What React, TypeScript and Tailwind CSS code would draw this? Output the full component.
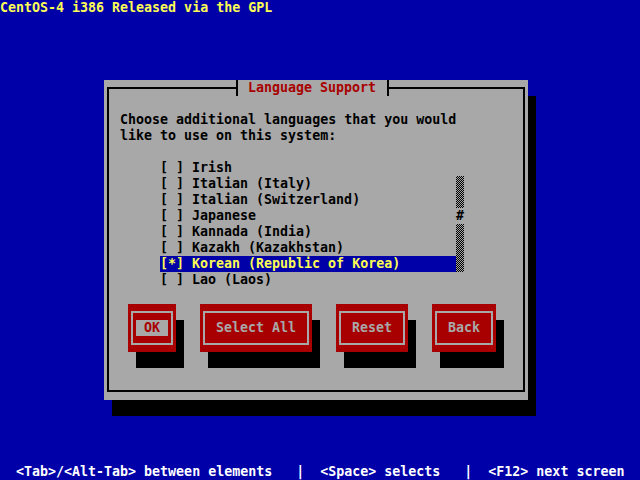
const items: { mark: string; name: string; sel?: boolean }[] = [
  { mark: " ", name: "Irish" },
  { mark: " ", name: "Italian (Italy)" },
  { mark: " ", name: "Italian (Switzerland)" },
  { mark: " ", name: "Japanese" },
  { mark: " ", name: "Kannada (India)" },
  { mark: " ", name: "Kazakh (Kazakhstan)" },
  { mark: "*", name: "Korean (Republic of Korea)", sel: true },
  { mark: " ", name: "Lao (Laos)" },
];

// scrollbar cells per row: "" blank, "c" checker, "#" thumb
const scroll = ["", "c", "c", "#", "c", "c", "c", ""];

function Button({ label, width, focus }: { label: string; width: string; focus?: boolean }) {
  return (
    <div className={`${width} h-12 bg-[#a80000] shadow-[8px_16px_0_0_#000] pt-[7px] pb-[7px] pl-[3px] pr-[3px]`}>
      <div className="h-full border-2 border-[#a8a8a8] flex items-center justify-center">
        {focus ? (
          <div className="w-8 h-4 bg-[#a8a8a8] text-[#a80000] whitespace-pre">{" " + label + " "}</div>
        ) : (
          <div className="h-4 text-[#a8a8a8] whitespace-pre">{label}</div>
        )}
      </div>
    </div>
  );
}

export default function App() {
  return (
    <div className="w-[640px] h-[480px] bg-[#0000a8] flex flex-col overflow-hidden font-['DejaVu_Sans_Mono',monospace] text-[13.3px] leading-4 font-bold">
      <div className="h-4 text-[#fcfc54] whitespace-pre">CentOS-4 i386 Released via the GPL</div>

      <div className="ml-[104px] mt-16 w-[424px] h-[320px] bg-[#a8a8a8] shadow-[8px_16px_0_0_#000] pl-[3px] pt-[7px]">
        <div className="relative w-[418px] h-[305px] border-2 border-black">
          <div className="absolute top-[-9px] left-[127px] h-4 flex bg-[#a8a8a8]">
            <div className="w-[2px] h-4 bg-black" />
            <div className="ml-[10px] w-[128px] text-[#a80000] whitespace-pre">Language Support</div>
            <div className="ml-[11px] w-[2px] h-4 bg-black" />
          </div>

          <div className="pl-[11px] pt-[23px] flex flex-col">
            <div className="text-black whitespace-pre">
              <div className="h-4">Choose additional languages that you would</div>
              <div className="h-4">like to use on this system:</div>
            </div>

            <div className="mt-4 ml-10 flex">
              <div className="w-[296px] flex flex-col">
                {items.map((it) => (
                  <div
                    key={it.name}
                    className={`h-4 whitespace-pre ${it.sel ? "bg-[#0000a8] text-[#fcfc54]" : "text-black"}`}
                  >
                    {`[${it.mark}] ${it.name}`}
                  </div>
                ))}
              </div>
              <div className="w-2 flex flex-col">
                {scroll.map((s, i) =>
                  s === "c" ? (
                    <div
                      key={i}
                      className="h-4 w-2 bg-[repeating-conic-gradient(#000_0_25%,#a8a8a8_0_50%)] bg-size-[2px_2px]"
                    />
                  ) : s === "#" ? (
                    <div key={i} className="h-4 w-2 text-black text-center">#</div>
                  ) : (
                    <div key={i} className="h-4 w-2" />
                  )
                )}
              </div>
            </div>

            <div className="mt-4 ml-2 flex gap-6">
              <Button label="OK" width="w-12" focus />
              <Button label="Select All" width="w-[112px]" />
              <Button label="Reset" width="w-[72px]" />
              <Button label="Back" width="w-16" />
            </div>
          </div>
        </div>
      </div>

      <div className="mt-auto h-4 text-white whitespace-pre">
        {"  <Tab>/<Alt-Tab> between elements   |  <Space> selects   |  <F12> next screen"}
      </div>
    </div>
  );
}
